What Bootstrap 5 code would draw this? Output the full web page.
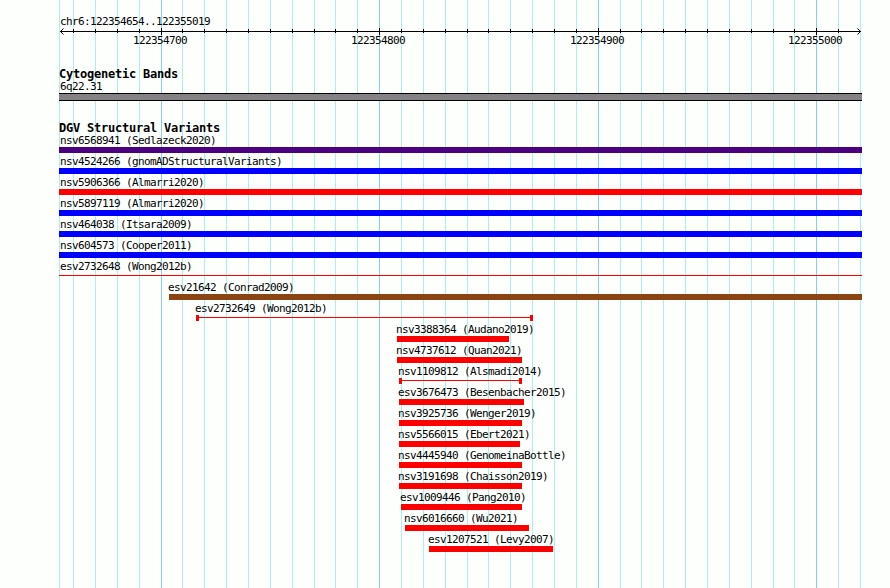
<!DOCTYPE html>
<html lang="en">
<head>
  <meta charset="UTF-8" />
  <meta name="viewport" content="width=device-width, initial-scale=1.0"/>
  <title>chr6:122354654..122355019</title>
  <link href="https://cdn.jsdelivr.net/npm/bootstrap@5.3.0/dist/css/bootstrap.min.css" rel="stylesheet"/>
  <style>
    body {
      background-color: #fdfffc;
      color: #000;
      font-family: "DejaVu Sans Mono", "Liberation Mono", monospace;
      font-size: 11px;
      line-height: 13px;
      letter-spacing: -0.622px;
    }
    .browser-panel {
      width: 890px;
      height: 588px;
    }
    .grid-layer {
      z-index: 0;
    }
    .tracks {
      z-index: 1;
      padding: 15px 28px 0 59px;
    }
    .region-label,
    .edge-label {
      padding-left: 1px;
    }
    .inner-label {
      margin-left: -1px;
    }
    .ruler {
      height: 20px;
      margin-left: -59px;
      margin-bottom: 20px;
    }
    .track-title {
      font-size: 12px;
      font-weight: bold;
      letter-spacing: -0.224px;
      line-height: 12px;
    }
    .band {
      height: 8px;
      background-color: #848284;
      border: 1px solid #000;
      border-width: 1px 0;
      margin-bottom: 21px;
    }
    .feature {
      height: 21px;
    }
    .feature-bar {
      height: 6px;
    }
    .feature-bar.thin {
      background: linear-gradient(#f00, #f00) 0 2px / 100% 1px no-repeat;
    }
    .cap {
      width: 3px;
      background-color: #f00;
    }
  </style>
</head>
<body>

<div class="browser-panel position-relative overflow-hidden">
  <!-- Grid lines -->
  <svg class="grid-layer position-absolute top-0 start-0" id="grid" width="890" height="588" shape-rendering="crispEdges"></svg>

  <div class="tracks position-relative">
    <!-- Ruler -->
    <div class="region-label">chr6:122354654..122355019</div>
    <svg class="ruler d-block" id="ruler" width="890" height="20"></svg>

    <!-- Cytogenetic Bands -->
    <div class="track-title">Cytogenetic Bands</div>
    <div class="edge-label">6q22.31</div>
    <div class="band"></div>

    <!-- Structural Variants -->
    <div class="track-title">DGV Structural Variants</div>
    <div id="variants"></div>
  </div>
</div>

<script>
  const LEFT = 59;
  const RIGHT = 862;
  const lines = [59, 73, 95, 117, 139, 161, 182, 204, 226, 248, 270, 292, 314, 335, 357, 379, 401, 423, 445,
    467, 488, 510, 532, 554, 576, 598, 620, 641, 663, 685, 707, 729, 751, 773, 794, 816, 838, 860];
  const major = { 161: '122354700', 379: '122354800', 598: '122354900', 816: '122355000' };

  // name, start, end, colour, shape
  const variants = [
    ['nsv6568941 (Sedlazeck2020)', 59, 862, '#4b0082'],
    ['nsv4524266 (gnomADStructuralVariants)', 59, 862, '#0000ff'],
    ['nsv5906366 (Almarri2020)', 59, 862, '#ff0000'],
    ['nsv5897119 (Almarri2020)', 59, 862, '#0000ff'],
    ['nsv464038 (Itsara2009)', 59, 862, '#0000ff'],
    ['nsv604573 (Cooper2011)', 59, 862, '#0000ff'],
    ['esv2732648 (Wong2012b)', 59, 862, '#ff0000', 'thin'],
    ['esv21642 (Conrad2009)', 169, 862, '#8b4513'],
    ['esv2732649 (Wong2012b)', 196, 533, '#ff0000', 'thin'],
    ['nsv3388364 (Audano2019)', 397, 509, '#ff0000'],
    ['nsv4737612 (Quan2021)', 397, 522, '#ff0000'],
    ['nsv1109812 (Alsmadi2014)', 399, 522, '#ff0000', 'thin'],
    ['esv3676473 (Besenbacher2015)', 399, 524, '#ff0000'],
    ['nsv3925736 (Wenger2019)', 399, 522, '#ff0000'],
    ['nsv5566015 (Ebert2021)', 399, 520, '#ff0000'],
    ['nsv4445940 (GenomeinaBottle)', 399, 522, '#ff0000'],
    ['nsv3191698 (Chaisson2019)', 399, 522, '#ff0000'],
    ['esv1009446 (Pang2010)', 401, 522, '#ff0000'],
    ['nsv6016660 (Wu2021)', 405, 529, '#ff0000'],
    ['esv1207521 (Levy2007)', 429, 553, '#ff0000']
  ];

  document.getElementById('grid').innerHTML = lines.map(x =>
    `<rect x="${x}" y="0" width="1" height="588" fill="${major[x] ? '#87ceeb' : '#afeeee'}"/>`
  ).join('');

  // Ruler: baseline, arrow heads, ticks and numbers
  let ruler = `
    <path d="M60 3.5H861M63.5 .5L60.5 3.5L63.5 6.5M857.5 .5L860.5 3.5L857.5 6.5" fill="none" stroke="#000"/>
  `;
  lines.slice(1, -1).forEach(x => {
    ruler += major[x]
      ? `<rect x="${x}" y="0" width="1" height="7"/><text x="${x - 28}" y="16">${major[x]}</text>`
      : `<rect x="${x}" y="1" width="1" height="4"/>`;
  });
  document.getElementById('ruler').innerHTML = ruler;

  document.getElementById('variants').innerHTML = variants.map(([name, start, end, colour, shape]) => {
    const fill = shape ? '' : `background-color:${colour};`;
    const caps = shape && start > LEFT && end < RIGHT ? '<span class="cap"></span><span class="cap"></span>' : '';
    return `
      <div class="feature" style="margin-left:${start - LEFT}px">
        <div class="text-nowrap ${start === LEFT ? 'edge-label' : 'inner-label'}">${name}</div>
        <div class="feature-bar d-flex justify-content-between ${shape || ''}" style="width:${end - start}px;${fill}">${caps}</div>
      </div>`;
  }).join('');
</script>

<script src="https://cdn.jsdelivr.net/npm/bootstrap@5.3.0/dist/js/bootstrap.bundle.min.js"></script>
</body>
</html>
